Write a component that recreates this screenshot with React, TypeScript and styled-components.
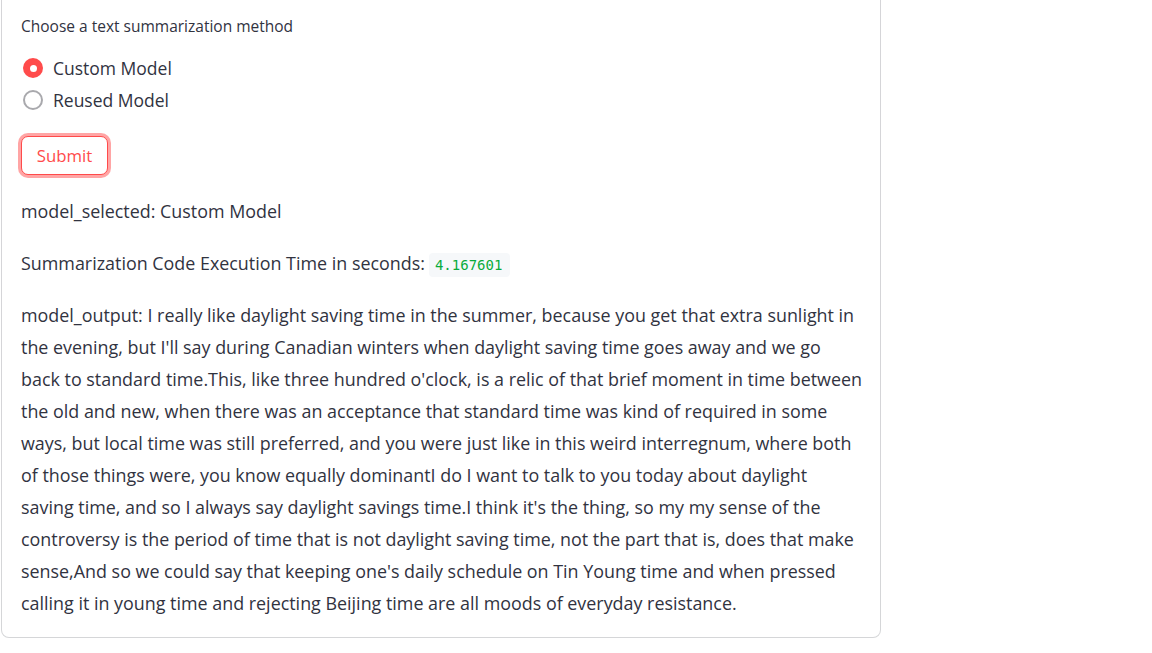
import React, { useState } from "react";
import styled, { createGlobalStyle } from "styled-components";

const GlobalStyle = createGlobalStyle`
  html, body { margin: 0; padding: 0; background: #ffffff; }
  body {
    font-family: "Open Sans", "Noto Sans", sans-serif;
    color: rgb(49, 51, 63);
    -webkit-font-smoothing: antialiased;
  }
`;

const Page = styled.div`
  width: 1152px;
  padding-left: 1px;
  box-sizing: border-box;
`;

const Form = styled.form`
  width: 880px;
  box-sizing: border-box;
  border: 1px solid rgba(49, 51, 63, 0.2);
  border-top: none;
  border-radius: 0 0 8px 8px;
  padding: 14px 19px 18px 18px;
  display: flex;
  flex-direction: column;
  align-items: flex-start;
`;

const Label = styled.div`
  font-size: 15.5px;
  line-height: 24px;
  height: 24px;
  margin-left: 1px;
  color: rgb(49, 51, 63);
`;

const RadioGroup = styled.div`
  margin-top: 14px;
  margin-left: 3px;
  display: flex;
  flex-direction: column;
`;

const RadioRow = styled.label`
  display: flex;
  align-items: center;
  height: 32px;
  gap: 10px;
  cursor: pointer;
  font-size: 17.5px;
  color: rgb(49, 51, 63);
`;

const RadioCircle = styled.span<{ $checked: boolean }>`
  width: 20px;
  height: 20px;
  border-radius: 50%;
  box-sizing: border-box;
  flex: none;
  background: ${(p) => (p.$checked ? "#ff4b4b" : "#ffffff")};
  border: ${(p) => (p.$checked ? "none" : "2.5px solid #a9a9ad")};
  display: flex;
  align-items: center;
  justify-content: center;
  &::after {
    content: "";
    display: ${(p) => (p.$checked ? "block" : "none")};
    width: 7px;
    height: 7px;
    border-radius: 50%;
    background: #ffffff;
  }
`;

const SubmitButton = styled.button`
  margin-top: 20px;
  margin-left: 1px;
  width: 87px;
  height: 39px;
  box-sizing: border-box;
  border: 1px solid #ff4b4b;
  border-radius: 7px;
  background: #ffffff;
  color: #ff4b4b;
  font-family: "Open Sans", "Noto Sans", sans-serif;
  font-size: 16.8px;
  padding: 0;
  box-shadow: 0 0 0 3px rgba(255, 75, 75, 0.5);
  cursor: pointer;
`;

const Text = styled.p<{ $top: number }>`
  margin: ${(p) => p.$top}px 0 0 1px;
  font-size: 17.9px;
  line-height: 32px;
  height: 32px;
  color: rgb(49, 51, 63);
`;

const Code = styled.code`
  font-family: "DejaVu Sans Mono", "Liberation Mono", monospace;
  font-size: 14px;
  line-height: 1;
  color: rgb(9, 171, 59);
  background: rgb(246, 248, 250);
  border-radius: 4px;
  padding: 4px 8px 4px 6px;
  margin-left: 4px;
`;

const Paragraph = styled.p`
  margin: 20px 0 0 1px;
  width: 842px;
  font-size: 17.9px;
  line-height: 32px;
  color: rgb(49, 51, 63);
`;

const OUTPUT =
  "model_output: I really like daylight saving time in the summer, because you get that extra sunlight in the evening, but I'll say during Canadian winters when daylight saving time goes away and we go back to standard time.This, like three hundred o'clock, is a relic of that brief moment in time between the old and new, when there was an acceptance that standard time was kind of required in some ways, but local time was still preferred, and you were just like in this weird interregnum, where both of those things were, you know equally dominantI do I want to talk to you today about daylight saving time, and so I always say daylight savings time.I think it's the thing, so my my sense of the controversy is the period of time that is not daylight saving time, not the part that is, does that make sense,And so we could say that keeping one's daily schedule on Tin Young time and when pressed calling it in young time and rejecting Beijing time are all moods of everyday resistance.";

export default function App() {
  const [choice, setChoice] = useState("Custom Model");
  const options = ["Custom Model", "Reused Model"];
  return (
    <>
      <GlobalStyle />
      <Page>
        <Form onSubmit={(e) => e.preventDefault()}>
          <Label>Choose a text summarization method</Label>
          <RadioGroup>
            {options.map((o) => (
              <RadioRow key={o} onClick={() => setChoice(o)}>
                <RadioCircle $checked={choice === o} />
                {o}
              </RadioRow>
            ))}
          </RadioGroup>
          <SubmitButton type="submit">Submit</SubmitButton>
          <Text $top={20}>model_selected: Custom Model</Text>
          <Text $top={20}>
            Summarization Code Execution Time in seconds:<Code>4.167601</Code>
          </Text>
          <Paragraph>{OUTPUT}</Paragraph>
        </Form>
      </Page>
    </>
  );
}
